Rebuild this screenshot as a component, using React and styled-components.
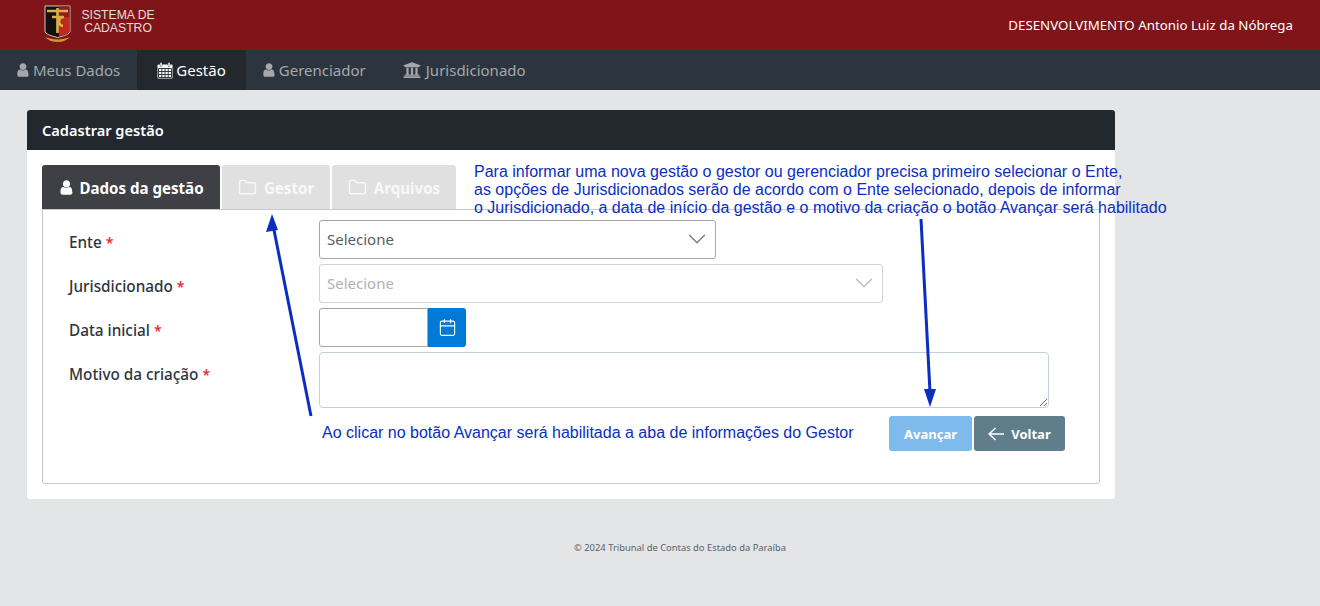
import React from 'react';
import styled, { createGlobalStyle } from 'styled-components';
import { FaUniversity } from 'react-icons/fa';
import { Calendar, ChevronDown, Folder } from 'lucide-react';

const GlobalStyle = createGlobalStyle`
  html, body {
    margin: 0;
    padding: 0;
    background: #e4e5e6;
  }
  body {
    font-family: "Noto Sans", "Open Sans", sans-serif;
    color: #2c353d;
  }
  * {
    box-sizing: border-box;
  }
`;

function Logo() {
  return (
    <LogoSvg width="28" height="38" viewBox="0 0 28 38">
      <path d="M1 1h25v25c0 3-5 4.500-12.500 6.500C6 30.500 1 29 1 26z" fill="#111" stroke="#cfc9ba" strokeWidth="1" />
      <path d="M15 1.500h10.500v11H15z" fill="#8d1c1e" />
      <path d="M15 12h10.500v14c0 2.500-4 3.500-10.500 5.500z" fill="#c2281f" />
      <path d="M3 6h21M13.500 3v25M8 12h11M20 12c-6 0-7 8-1 9" fill="none" stroke="#dcae48" strokeWidth="2.700" />
      <path d="M1 32c3 3 7 5 12.500 5S23 35 26 32c-4 1.500-8 2.500-12.500 2.500S5 33.500 1 32z" fill="#c99a2e" />
    </LogoSvg>
  );
}

function UserIcon({ size }) {
  return (
    <svg width={size} height={size} viewBox="0 0 1792 1792" fill="currentColor">
      <path d="M1536 1399q0 109-62.500 187t-150.500 78h-854q-88 0-150.500-78t-62.500-187q0-85 8.500-160.500t31.500-151.500 59-130 95-88.500 137-34.500q120 115 290 115t290-115q72 0 137 34.500t95 88.500 59 130 31.500 151.500 8.500 160.500zm-256-887q0 159-112.500 271.500t-271.500 112.500-271.500-112.500-112.500-271.500 112.500-271.500 271.500-112.500 271.500 112.500 112.500 271.500z" />
    </svg>
  );
}

function CalendarIcon() {
  return (
    <svg width="16" height="17" viewBox="0 0 16 17">
      <rect x="0.500" y="2.500" width="15" height="14" rx="1" fill="currentColor" />
      <rect x="3" y="0.500" width="2" height="4" rx="0.700" fill="currentColor" stroke="#23282e" strokeWidth="0.500" />
      <rect x="11" y="0.500" width="2" height="4" rx="0.700" fill="currentColor" stroke="#23282e" strokeWidth="0.500" />
      <path d="M1.500 6.500h13v9h-13zM4.800 6.500v9M8 6.500v9M11.200 6.500v9M1.500 9.500h13M1.500 12.500h13" fill="none" stroke="#23282e" strokeWidth="0.900" />
    </svg>
  );
}

function BackArrow() {
  return (
    <svg width="16" height="14" viewBox="0 0 16 14" fill="none" stroke="currentColor" strokeWidth="1.500">
      <path d="M1 7h15M7.500 1L1 7l6.500 6" />
    </svg>
  );
}

function FormRow({ label, children }) {
  return (
    <>
      <Label>
        {label} <Required>*</Required>
      </Label>
      <div>{children}</div>
    </>
  );
}

function App() {
  return (
    <Page>
      <GlobalStyle />
      <TopBar>
        <Brand>
          <Logo />
          <BrandName>
            SISTEMA DE
            <br />
            CADASTRO
          </BrandName>
        </Brand>
        <UserName>DESENVOLVIMENTO Antonio Luiz da Nóbrega</UserName>
      </TopBar>
      <Nav>
        <NavItem>
          <UserIcon size={16} /> Meus Dados
        </NavItem>
        <NavItem $active>
          <CalendarIcon /> Gestão
        </NavItem>
        <NavItem>
          <UserIcon size={16} /> Gerenciador
        </NavItem>
        <NavItem $wide>
          <FaUniversity size={18} /> Jurisdicionado
        </NavItem>
      </Nav>
      <Content>
        <Card>
          <CardHeader>Cadastrar gestão</CardHeader>
          <CardBody>
            <Tabs>
              <Tab $active $width={178}>
                <UserIcon size={17} /> Dados da gestão
              </Tab>
              <Tab $width={108}>
                <Folder size={19} strokeWidth={1.8} /> Gestor
              </Tab>
              <Tab $width={124}>
                <Folder size={19} strokeWidth={1.8} /> Arquivos
              </Tab>
            </Tabs>
            <Panel>
              <FormGrid>
                <FormRow label="Ente">
                  <Select $width={397}>
                    Selecione
                    <ChevronDown size={30} strokeWidth={1} />
                  </Select>
                </FormRow>
                <FormRow label="Jurisdicionado">
                  <Select $width={564} $disabled>
                    Selecione
                    <ChevronDown size={30} strokeWidth={1} />
                  </Select>
                </FormRow>
                <FormRow label="Data inicial">
                  <DateField>
                    <DateInput />
                    <DateButton>
                      <Calendar size={19} strokeWidth={1.4} />
                    </DateButton>
                  </DateField>
                </FormRow>
                <FormRow label="Motivo da criação">
                  <TextArea />
                </FormRow>
              </FormGrid>
              <Actions>
                <AdvanceButton>Avançar</AdvanceButton>
                <BackButton>
                  <BackArrow /> Voltar
                </BackButton>
              </Actions>
            </Panel>
          </CardBody>
        </Card>
      </Content>
      <Footer>© 2024 Tribunal de Contas do Estado da Paraíba</Footer>

      <NoteTop>
        Para informar uma nova gestão o gestor ou gerenciador precisa primeiro selecionar o Ente,
        <br />
        as opções de Jurisdicionados serão de acordo com o Ente selecionado, depois de informar
        <br />o Jurisdicionado, a data de início da gestão e o motivo da criação o botão Avançar será habilitado
      </NoteTop>
      <NoteBottom>Ao clicar no botão Avançar será habilitada a aba de informações do Gestor</NoteBottom>
      <ArrowLayer viewBox="0 0 1320 606">
        <path d="M311 416 L274 230" stroke="#0a2fc0" strokeWidth="3" />
        <path d="M272 214 L266 232 L278 230z" fill="#0a2fc0" />
        <path d="M921 219 L930 392" stroke="#0a2fc0" strokeWidth="3" />
        <path d="M930 407 L924 389 L936 389z" fill="#0a2fc0" />
      </ArrowLayer>
    </Page>
  );
}

export default App;

const Page = styled.div`
  position: relative;
  height: 606px;
  overflow: hidden;
`;
const TopBar = styled.div`
  display: flex;
  align-items: center;
  justify-content: space-between;
  height: 50px;
  padding: 0 27px 0 44px;
  background: #7f1419;
`;
const Brand = styled.div`
  display: flex;
  align-items: center;
  gap: 8px;
  margin-top: -2px;
`;
const LogoSvg = styled.svg`
  display: block;
`;
const BrandName = styled.div`
  width: 76px;
  margin-bottom: 5px;
  color: #e6dcdc;
  font-family: "Liberation Sans", Arial, sans-serif;
  font-size: 12.200px;
  line-height: 13px;
  text-align: center;
`;
const UserName = styled.div`
  color: #fff;
  font-size: 13.300px;
`;
const Nav = styled.nav`
  display: flex;
  height: 40px;
  background: #2c353d;
`;
const NavItem = styled.div`
  display: flex;
  align-items: center;
  gap: ${(p) => (p.$wide ? '5px' : p.$active ? '3px' : '2px')};
  padding: 0 ${(p) => (p.$active ? '20px' : '17px')} 0 ${(p) => (p.$active || p.$wide ? '20px' : '15px')};
  font-size: 15px;
  color: ${(p) => (p.$active ? '#fff' : '#a3a8ad')};
  background: ${(p) => (p.$active ? '#23282e' : 'transparent')};
`;
const Content = styled.div`
  padding: 20px 0 0 27px;
`;
const Card = styled.div`
  width: 1088px;
  height: 389px;
  background: #fff;
  border-radius: 3px;
`;
const CardHeader = styled.div`
  display: flex;
  align-items: center;
  height: 40px;
  padding: 0 15px;
  background: #23282f;
  border-radius: 3px 3px 0 0;
  color: #fff;
  font-size: 14.600px;
  font-weight: 600;
`;
const CardBody = styled.div`
  padding: 15px;
`;
const Tabs = styled.div`
  display: flex;
  gap: 2px;
`;
const Tab = styled.div`
  display: flex;
  align-items: center;
  justify-content: center;
  gap: ${(p) => (p.$active ? '4px' : '7px')};
  width: ${(p) => p.$width}px;
  height: 44px;
  padding-top: 1px;
  border-radius: 3px 3px 0 0;
  background: ${(p) => (p.$active ? '#3f4045' : '#e0e0e0')};
  color: ${(p) => (p.$active ? '#fff' : '#f8f8f8')};
  font-size: 15.100px;
  font-weight: 700;
`;
const Panel = styled.div`
  height: 275px;
  padding: 10px 16px 0 26px;
  border: 1px solid #c8c8c8;
  border-radius: 0 0 3px 3px;
`;
const FormGrid = styled.div`
  display: grid;
  grid-template-columns: 250px 1fr;
  row-gap: 5px;
`;
const Label = styled.div`
  padding-top: 12px;
  color: #2c353d;
  font-size: 15.300px;
  font-weight: 500;
`;
const Required = styled.span`
  color: #e2232a;
  font-size: 14px;
`;
const Select = styled.div`
  display: flex;
  align-items: center;
  justify-content: space-between;
  width: ${(p) => p.$width}px;
  height: 39px;
  padding: 0 3px 1px 7px;
  border: 1px solid ${(p) => (p.$disabled ? '#d3d3d3' : '#a6a6a6')};
  border-radius: 3px;
  color: ${(p) => (p.$disabled ? '#b2b2b2' : '#555f68')};
  font-size: 15px;
  svg {
    color: ${(p) => (p.$disabled ? '#bbb' : '#777')};
  }
`;
const DateField = styled.div`
  display: flex;
  width: 147px;
  height: 39px;
`;
const DateInput = styled.div`
  width: 109px;
  border: 1px solid #a6a6a6;
  border-radius: 3px 0 0 3px;
  background: #fff;
`;
const DateButton = styled.div`
  display: flex;
  align-items: center;
  justify-content: center;
  width: 38px;
  background: #007ad9;
  border-radius: 0 3px 3px 0;
  color: #fff;
`;
const TextArea = styled.textarea`
  display: block;
  width: 730px;
  height: 56px;
  border: 1px solid #c3d0da;
  border-radius: 4px;
  background: #fff;
  outline: none;
`;
const Actions = styled.div`
  display: flex;
  justify-content: flex-end;
  gap: 2px;
  margin-top: 8px;
  padding-right: 18px;
`;
const ActionButton = styled.div`
  display: flex;
  align-items: center;
  justify-content: center;
  height: 35px;
  border-radius: 3px;
  color: #fff;
  font-size: 13px;
  font-weight: 700;
`;
const AdvanceButton = styled(ActionButton)`
  width: 83px;
  background: #7fbaec;
`;
const BackButton = styled(ActionButton)`
  gap: 7px;
  width: 91px;
  background: #607d8b;
`;
const Footer = styled.div`
  margin-top: 43px;
  padding-left: 40px;
  color: #5c6268;
  font-size: 9.400px;
  line-height: 12px;
  text-align: center;
`;
const NoteTop = styled.div`
  position: absolute;
  left: 474px;
  top: 163px;
  color: #0a2fc0;
  font-family: "Liberation Sans", Arial, sans-serif;
  font-size: 16px;
  line-height: 18px;
  white-space: nowrap;
`;
const NoteBottom = styled.div`
  position: absolute;
  left: 322px;
  top: 424px;
  color: #0a2fc0;
  font-family: "Liberation Sans", Arial, sans-serif;
  font-size: 16px;
  line-height: 18px;
  white-space: nowrap;
`;
const ArrowLayer = styled.svg`
  position: absolute;
  left: 0;
  top: 0;
  width: 1320px;
  height: 606px;
  pointer-events: none;
`;
